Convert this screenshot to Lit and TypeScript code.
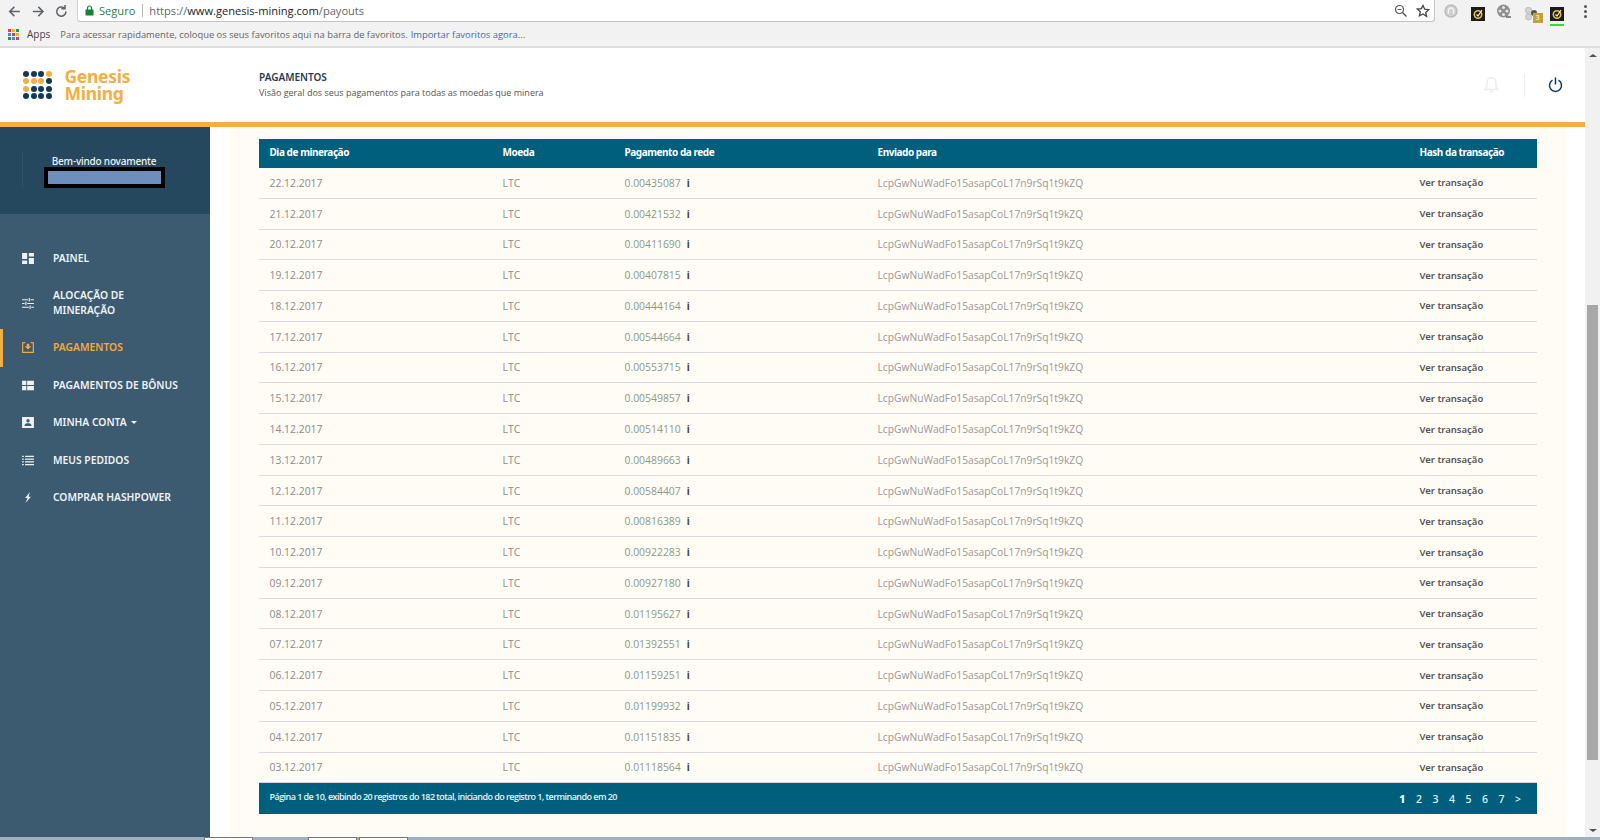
import { LitElement, css, html, svg } from "lit";
import { customElement } from "lit/decorators.js";

const amounts = [
  "0.00435087", "0.00421532", "0.00411690", "0.00407815", "0.00444164",
  "0.00544664", "0.00553715", "0.00549857", "0.00514110", "0.00489663",
  "0.00584407", "0.00816389", "0.00922283", "0.00927180", "0.01195627",
  "0.01392551", "0.01159251", "0.01199932", "0.01151835", "0.01118564",
];

const NAVY = "#123a56";
const ORANGE = "#f5ae41";
const dotRows = [
  [NAVY, NAVY, NAVY, ORANGE],
  [ORANGE, ORANGE, ORANGE, NAVY],
  [ORANGE, NAVY, NAVY, NAVY],
  [NAVY, NAVY, NAVY, NAVY],
];
const appsColors = ["#db4437", "#f4b400", "#0f9d58", "#4285f4", "#db4437", "#f4b400", "#0f9d58", "#4285f4", "#db4437"];

const menuIcons: Record<string, unknown> = {
  panel: svg`<path d="M0 0h6v7H0zM8 0h6v4H8zM8 6h6v7H8zM0 9h6v4H0z" fill="currentColor"/>`,
  sliders: svg`<path d="M0 2h7M10 2h4M0 6.500h3M6 6.500h8M0 11h8M11 11h3M8.500 0v4M4.500 4.500v4M9.500 9v4" stroke="currentColor" stroke-width="1.300" fill="none"/>`,
  payout: svg`<path d="M.7.7v11.600h12.600V.7" stroke="currentColor" stroke-width="1.400" fill="none"/><path d="M.7.7h3M10.300.7h3" stroke="currentColor" stroke-width="1.400"/><path d="M5.500 2h3v3H11L7 9 3 5h2.500z" fill="currentColor"/>`,
  bonus: svg`<path d="M0 1h5v5H0zM6 1h8v5H6zM0 7h5v5H0zM6 7h8v5H6z" fill="currentColor"/>`,
  account: svg`<path fill-rule="evenodd" d="M0 0h14v13H0zM7 2.500a2 2 0 100 4 2 2 0 000-4zM3 10.500h8V9.500c0-1.500-2.500-2-4-2s-4 .5-4 2z" fill="currentColor"/>`,
  orders: svg`<path d="M0 1h2v1.500H0zM3.500 1H14v1.500H3.500zM0 4.200h2v1.500H0zM3.500 4.200H14v1.500H3.500zM0 7.400h2v1.500H0zM3.500 7.400H14v1.500H3.500zM0 10.600h2v1.500H0zM3.500 10.600H14v1.500H3.500z" fill="currentColor"/>`,
  bolt: svg`<path d="M9.500 0L3.500 7h3L4 13 10.500 5.500h-3z" fill="currentColor"/>`,
};

const menu = [
  { icon: "panel", label: "PAINEL" },
  { icon: "sliders", label: "ALOCAÇÃO DE MINERAÇÃO", tall: true },
  { icon: "payout", label: "PAGAMENTOS", active: true },
  { icon: "bonus", label: "PAGAMENTOS DE BÔNUS" },
  { icon: "account", label: "MINHA CONTA", caret: true },
  { icon: "orders", label: "MEUS PEDIDOS" },
  { icon: "bolt", label: "COMPRAR HASHPOWER" },
];

const targetIcon = html`<svg width="14" height="14" viewBox="0 0 14 14">
  <rect width="14" height="14" fill="#1c1c1c"/>
  <circle cx="7" cy="7.500" r="3.700" fill="none" stroke="#e8c33c" stroke-width="1.600"/>
  <path d="M5.500 7.500l1.500 1.500 4-6" fill="none" stroke="#f4f0d0" stroke-width="1.200"/>
</svg>`;

@customElement("app-root")
export class AppRoot extends LitElement {
  static styles = css`
    :host {
      display: block;
      width: 1600px;
      height: 840px;
      overflow: hidden;
      font-family: "Open Sans", sans-serif;
      background: #fff;
    }
    .toolbar {
      height: 22px;
      background: #f2f2f2;
      display: flex;
      align-items: center;
      color: #5f6368;
    }
    .nav {
      display: flex;
      gap: 9px;
      padding: 0 8px 0 7px;
      flex: none;
      width: 77px;
      box-sizing: border-box;
    }
    .omnibox {
      width: 1358px;
      height: 22px;
      background: #fff;
      border: 1px solid #c4c4c4;
      border-top: none;
      border-left-color: #d0d0d0;
      border-radius: 0 0 3px 3px;
      box-sizing: border-box;
      display: flex;
      align-items: center;
      font-size: 11.100px;
      padding-left: 7px;
      flex: none;
    }
    .secure {
      color: #2e7d4f;
      margin-left: 5px;
      padding-right: 7px;
      border-right: 1px solid #bbb;
      line-height: 13px;
    }
    .url {
      margin-left: 6px;
      color: #666;
    }
    .url b {
      font-weight: 400;
      color: #222;
    }
    .omni-end {
      margin-left: auto;
      display: flex;
      gap: 8px;
      padding-right: 4px;
    }
    .exts {
      display: flex;
      align-items: center;
      margin-left: 9px;
    }
    .ext {
      width: 14px;
      height: 14px;
      margin-right: 12.500px;
      flex: none;
      display: block;
    }
    .puzzle {
      position: relative;
    }
    .badge {
      position: absolute;
      right: -5px;
      bottom: -5px;
      width: 10px;
      height: 10px;
      background: #c0a23a;
      color: #fff;
      font-size: 7px;
      line-height: 10px;
      text-align: center;
    }
    .dots3 {
      display: flex;
      flex-direction: column;
      gap: 2px;
      margin-left: 7px;
    }
    .dots3 i {
      width: 3px;
      height: 3px;
      border-radius: 50%;
      background: #555;
    }
    .bookmarks {
      height: 26px;
      background: #f2f2f2;
      border-bottom: 2px solid #dcdcdc;
      box-sizing: border-box;
      display: flex;
      align-items: center;
      padding-left: 8px;
      font-size: 9.400px;
      color: #666;
    }
    .apps {
      display: grid;
      grid-template-columns: repeat(3, 3px);
      gap: 1px;
      margin-right: 8px;
    }
    .apps i {
      height: 3px;
    }
    .apps-label {
      color: #444;
      font-size: 10px;
      margin-right: 10px;
    }
    .bookmarks a {
      color: #4a63c9;
      margin-left: 3px;
    }
    .shell {
      display: flex;
      height: 789px;
    }
    .page {
      width: 1585px;
      flex: none;
      display: flex;
      flex-direction: column;
    }
    .header {
      height: 74px;
      border-bottom: 5px solid #f5ae41;
      display: flex;
      align-items: center;
      flex: none;
      background: #fff;
    }
    .logo {
      width: 259px;
      flex: none;
      display: flex;
      align-items: center;
      padding-left: 23px;
      box-sizing: border-box;
      gap: 13px;
    }
    .dots {
      display: grid;
      grid-template-columns: repeat(4, 6px);
      gap: 1.500px;
    }
    .dots i {
      height: 6px;
      border-radius: 50%;
    }
    .brand {
      color: #f5ae41;
      font-family: "Noto Sans", sans-serif;
      font-weight: 700;
      font-size: 17.500px;
      line-height: 17px;
      letter-spacing: -0.300px;
    }
    .title {
      flex: 1;
    }
    .title h1 {
      margin: 0;
      font-family: "Noto Sans", sans-serif;
      font-size: 10px;
      line-height: 15px;
      font-weight: 600;
      color: #223e52;
    }
    .title p {
      margin: 0;
      font-size: 9px;
      line-height: 15px;
      color: #555;
    }
    .head-actions {
      display: flex;
      align-items: center;
      margin-right: 22px;
    }
    .bell {
      margin-right: 25px;
    }
    .sep {
      width: 1px;
      height: 23px;
      background: #eee;
      margin-right: 23px;
    }
    .body {
      display: flex;
      flex: 1;
      min-height: 0;
    }
    .side {
      width: 210px;
      flex: none;
      background: #3d5b70;
      color: #eef2f5;
      font-family: "Noto Sans", sans-serif;
    }
    .welcome {
      position: relative;
      height: 87px;
      background: #26485f;
      display: flex;
      flex-direction: column;
      align-items: center;
      padding: 29px 2px 0 0;
      box-sizing: border-box;
      font-size: 10px;
      line-height: 11px;
      font-weight: 500;
      letter-spacing: -0.200px;
      color: #f0f0f0;
    }
    .welcome::before {
      content: "";
      position: absolute;
      left: 22px;
      top: 25px;
      width: 1px;
      height: 36px;
      background: #31536a;
    }
    .mask {
      width: 113px;
      height: 13px;
      border: 4px solid #000;
      background: #6e8fbd;
    }
    .items {
      padding-top: 25.500px;
    }
    .item {
      height: 37.500px;
      display: flex;
      align-items: center;
      font-size: 10.300px;
      line-height: 15px;
      font-weight: 600;
      border-left: 3px solid transparent;
      box-sizing: border-box;
      padding-left: 19px;
    }
    .item.tall {
      height: 52px;
    }
    .item.active {
      color: #f5a83c;
      border-left-color: #f5ae41;
    }
    .item svg {
      width: 12px;
      height: 11px;
      margin-right: 19px;
      flex: none;
    }
    .item span {
      width: 115px;
    }
    .item.wide span {
      width: auto;
    }
    .caret {
      display: inline-block;
      border: 3px solid transparent;
      border-top: 3px solid #eef2f5;
      border-bottom: none;
      margin-left: 4px;
      vertical-align: 2px;
    }
    .gutter {
      width: 18px;
      flex: none;
    }
    .content {
      width: 1339px;
      flex: none;
      background: #fffcf5;
      padding: 12px 30px 0 31px;
      box-sizing: border-box;
    }
    .row {
      display: grid;
      grid-template-columns: 243.500px 122px 253px 542px 117.500px;
      align-items: center;
    }
    .row > div {
      padding-left: 10.500px;
    }
    .row > div:nth-child(n + 2) {
      padding-left: 0;
    }
    .thead {
      height: 29px;
      background: #005f7c;
      color: #fff;
      font-family: "Noto Sans", sans-serif;
      font-weight: 700;
      font-size: 10px;
      letter-spacing: -0.450px;
      padding-bottom: 3px;
      box-sizing: border-box;
    }
    .tr {
      height: 30.780px;
      font-size: 10.400px;
      color: #8b8b8b;
      border-bottom: 1px solid #d8dae0;
      box-sizing: border-box;
    }
    .amount {
      color: #8a9a8a;
    }
    .amount b {
      color: #444;
      font-family: "Noto Sans", sans-serif;
      margin-left: 6px;
      font-size: 10px;
    }
    .addr {
      color: #999;
      font-size: 10.250px;
    }
    .link {
      color: #555;
      font-family: "Noto Sans", sans-serif;
      font-weight: 600;
      font-size: 9.500px;
    }
    .tfoot {
      height: 31px;
      background: #005f7c;
      color: #e9f1f4;
      display: flex;
      align-items: flex-start;
      justify-content: space-between;
      padding: 7px 16px 0 10.500px;
      box-sizing: border-box;
      font-size: 9px;
      font-weight: 600;
      letter-spacing: -0.550px;
    }
    .pages {
      display: flex;
      gap: 10.500px;
      font-family: "Noto Sans", sans-serif;
      font-size: 10.500px;
      font-weight: 500;
      letter-spacing: 0;
      margin-top: 2px;
    }
    .pages .on {
      font-weight: 800;
      color: #fff;
    }
    .scroll {
      width: 15px;
      flex: none;
      background: #f1f1f1;
      display: flex;
      flex-direction: column;
      align-items: center;
      box-sizing: border-box;
      padding-top: 6px;
    }
    .arrow-up {
      border: 3px solid transparent;
      border-bottom: 3px solid #505050;
      border-top: none;
      border-left-width: 4px;
      border-right-width: 4px;
    }
    .thumb {
      width: 11px;
      height: 455px;
      background: #a8a8a8;
      margin-top: 248px;
    }
    .arrow-down {
      border: 3px solid transparent;
      border-top: 3px solid #505050;
      border-bottom: none;
      border-left-width: 4px;
      border-right-width: 4px;
      margin-top: auto;
      margin-bottom: 5px;
    }
    .taskbar {
      height: 3px;
      background: #9fb0c0;
      display: flex;
    }
    .taskbar i {
      background: #fff;
      height: 3px;
      width: 49px;
      border: 1px solid #777;
      border-bottom: none;
      box-sizing: border-box;
    }
    .tab-first {
      margin-left: 204px;
    }
    .tab-second {
      margin-left: 55px;
    }
    .tab-third {
      margin-left: 2px;
    }
  `;

  render() {
    return html`
      <div class="toolbar">
        <div class="nav">
          <svg width="15" height="15" viewBox="0 0 16 16"><path d="M14 8H3M8 3L3 8l5 5" fill="none" stroke="#5f6368" stroke-width="1.700"/></svg>
          <svg width="15" height="15" viewBox="0 0 16 16"><path d="M2 8h11M8 3l5 5-5 5" fill="none" stroke="#5f6368" stroke-width="1.700"/></svg>
          <svg width="15" height="15" viewBox="0 0 16 16"><path d="M13 8a5 5 0 11-1.500-3.500M12 1v4H8" fill="none" stroke="#5f6368" stroke-width="1.700"/></svg>
        </div>
        <div class="omnibox">
          <svg width="9" height="11" viewBox="0 0 9 11"><path d="M2.500 5V3a2 2 0 014 0v2" fill="none" stroke="#188038" stroke-width="1.200"/><path d="M.5 4.500h8V10.500h-8z" fill="#188038"/></svg>
          <span class="secure">Seguro</span>
          <span class="url">https://<b>www.genesis-mining.com</b>/payouts</span>
          <div class="omni-end">
            <svg width="14" height="14" viewBox="0 0 14 14"><circle cx="5.500" cy="5.500" r="4" fill="none" stroke="#555" stroke-width="1.200"/><path d="M8.500 8.500l4 4" stroke="#555" stroke-width="1.500"/><path d="M3.500 5.500h4" stroke="#555"/></svg>
            <svg width="14" height="14" viewBox="0 0 24 24"><path d="M12 2.500l2.900 6.400 7 .8-5.200 4.700 1.400 6.900L12 17.100l-6.100 3.200 1.400-6.900-5.200-4.700 7-.8z" fill="none" stroke="#444" stroke-width="2.200"/></svg>
          </div>
        </div>
        <div class="exts">
          <svg class="ext" viewBox="0 0 14 14"><circle cx="7" cy="7" r="6" fill="#d0d0d0" stroke="#bcbcbc" stroke-width="1.500"/><path d="M4.500 10V6.500a2.500 2.500 0 015 0V10" fill="none" stroke="#f2f2f2" stroke-width="1.300"/></svg>
          <span class="ext">${targetIcon}</span>
          <svg class="ext" viewBox="0 0 14 14"><circle cx="6.500" cy="7" r="6.500" fill="#8f8f8f"/><circle cx="6.500" cy="3.500" r="1.500" fill="#e8e8e8"/><circle cx="3" cy="7" r="1.500" fill="#e8e8e8"/><circle cx="10" cy="7" r="1.500" fill="#e8e8e8"/><circle cx="6.500" cy="10.500" r="1.500" fill="#e8e8e8"/><path d="M9 13h5" stroke="#666" stroke-width="1.500"/></svg>
          <span class="ext puzzle">
            <svg width="14" height="14" viewBox="0 0 14 14"><circle cx="4.500" cy="3.500" r="3.200" fill="#d4d4d4" stroke="#aaa" stroke-width=".6"/><circle cx="4.500" cy="10" r="3" fill="#d4d4d4" stroke="#aaa" stroke-width=".6"/><circle cx="10" cy="6" r="3" fill="#555"/></svg>
            <span class="badge">3</span>
          </span>
          <span class="ext">${targetIcon}<svg width="14" height="2" style="display:block;margin-top:-2px"><rect width="14" height="2" fill="#2fe02f"/></svg></span>
          <div class="dots3"><i></i><i></i><i></i></div>
        </div>
      </div>
      <div class="bookmarks">
        <div class="apps">${appsColors.map((c) => html`<i style="background:${c}"></i>`)}</div>
        <span class="apps-label">Apps</span>
        <span>Para acessar rapidamente, coloque os seus favoritos aqui na barra de favoritos.</span>
        <a>Importar favoritos agora...</a>
      </div>
      <div class="shell">
        <div class="page">
          <header class="header">
            <div class="logo">
              <div class="dots">
                ${dotRows.flat().map((c) => html`<i style="background:${c}"></i>`)}
              </div>
              <div class="brand">Genesis<br />Mining</div>
            </div>
            <div class="title">
              <h1>PAGAMENTOS</h1>
              <p>Visão geral dos seus pagamentos para todas as moedas que minera</p>
            </div>
            <div class="head-actions">
              <svg class="bell" width="15" height="18" viewBox="0 0 15 18"><path d="M7.500 1.500c-3 0-4.500 2.500-4.500 5V11l-2 2.500h13L12 11V6.500c0-2.500-1.500-5-4.500-5zM6 15.500h3" fill="none" stroke="#ececec" stroke-width="1.300"/></svg>
              <div class="sep"></div>
              <svg width="15" height="16" viewBox="0 0 15 16"><path d="M4.500 3.200a6 6 0 106 0M7.500 .5v7" fill="none" stroke="#123a56" stroke-width="1.500"/></svg>
            </div>
          </header>
          <div class="body">
            <aside class="side">
              <div class="welcome">
                Bem-vindo novamente
                <div class="mask"></div>
              </div>
              <div class="items">
                ${menu.map(
                  (m) => html`
                    <div class="item ${m.tall ? "tall" : "wide"} ${m.active ? "active" : ""}">
                      <svg viewBox="0 0 14 13">${menuIcons[m.icon]}</svg>
                      <span>${m.label}${m.caret ? html`<i class="caret"></i>` : ""}</span>
                    </div>
                  `
                )}
              </div>
            </aside>
            <div class="gutter"></div>
            <main class="content">
              <div class="row thead">
                <div>Dia de mineração</div>
                <div>Moeda</div>
                <div>Pagamento da rede</div>
                <div>Enviado para</div>
                <div>Hash da transação</div>
              </div>
              ${amounts.map(
                (a, i) => html`
                  <div class="row tr">
                    <div>${String(22 - i).padStart(2, "0")}.12.2017</div>
                    <div>LTC</div>
                    <div class="amount">${a}<b>i</b></div>
                    <div class="addr">LcpGwNuWadFo15asapCoL17n9rSq1t9kZQ</div>
                    <div class="link">Ver transação</div>
                  </div>
                `
              )}
              <div class="tfoot">
                <span>Página 1 de 10, exibindo 20 registros do 182 total, iniciando do registro 1, terminando em 20</span>
                <div class="pages">
                  <span class="on">1</span><span>2</span><span>3</span><span>4</span><span>5</span><span>6</span><span>7</span><span>&gt;</span>
                </div>
              </div>
            </main>
          </div>
        </div>
        <div class="scroll">
          <div class="arrow-up"></div>
          <div class="thumb"></div>
          <div class="arrow-down"></div>
        </div>
      </div>
      <div class="taskbar">
        <i class="tab-first"></i><i class="tab-second"></i><i class="tab-third"></i>
      </div>
    `;
  }
}
